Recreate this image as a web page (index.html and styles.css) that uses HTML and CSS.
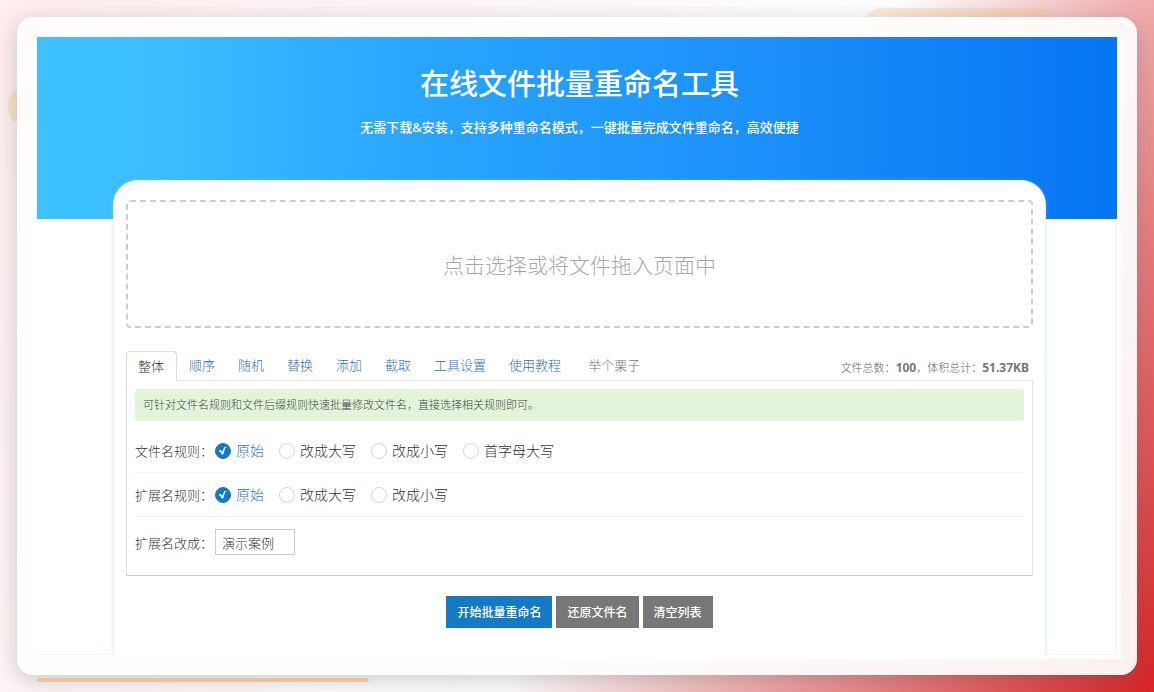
FILE: index.html
```html
<!DOCTYPE html>
<html lang="zh-CN">

<head>
    <meta charset="UTF-8">
    <meta name="viewport" content="width=device-width, initial-scale=1.0">
    <title>在线文件批量重命名工具</title>
    <link rel="stylesheet" href="styles.css">
</head>

<body>

    <div class="deco deco-top"></div>
    <div class="deco deco-left"></div>
    <div class="deco deco-bottom"></div>

    <div class="frame">
        <div class="screen">

            <header class="hero">
                <h1>在线文件批量重命名工具</h1>
                <p>无需下载&amp;安装，支持多种重命名模式，一键批量完成文件重命名，高效便捷</p>
            </header>

            <main class="card">
                <label class="dropzone" for="files">点击选择或将文件拖入页面中
                    <input type="file" id="files" name="files" multiple>
                </label>

                <div class="tabbar">
                    <nav class="tabs">
                        <a href="#" class="active">整体</a>
                        <a href="#">顺序</a>
                        <a href="#">随机</a>
                        <a href="#">替换</a>
                        <a href="#">添加</a>
                        <a href="#">截取</a>
                        <a href="#">工具设置</a>
                        <a href="#">使用教程</a>
                        <a href="#" class="example">举个栗子</a>
                    </nav>
                    <div class="stats">文件总数：<b>100</b>，体积总计：<b>51.37KB</b></div>
                </div>

                <form id="rename">
                    <div class="panel">
                        <div class="notice">可针对文件名规则和文件后缀规则快速批量修改文件名，直接选择相关规则即可。</div>

                        <div class="row" role="radiogroup" aria-labelledby="namelabel">
                            <span class="title" id="namelabel">文件名规则：</span>
                            <label class="option"><input type="radio" name="namerule" value="original" checked><span>原始</span></label>
                            <label class="option"><input type="radio" name="namerule" value="upper"><span>改成大写</span></label>
                            <label class="option"><input type="radio" name="namerule" value="lower"><span>改成小写</span></label>
                            <label class="option"><input type="radio" name="namerule" value="capital"><span>首字母大写</span></label>
                        </div>

                        <div class="row" role="radiogroup" aria-labelledby="extlabel">
                            <span class="title" id="extlabel">扩展名规则：</span>
                            <label class="option"><input type="radio" name="extrule" value="original" checked><span>原始</span></label>
                            <label class="option"><input type="radio" name="extrule" value="upper"><span>改成大写</span></label>
                            <label class="option"><input type="radio" name="extrule" value="lower"><span>改成小写</span></label>
                        </div>

                        <div class="row last">
                            <label class="title" for="newext">扩展名改成：</label>
                            <input type="text" class="text" id="newext" name="newext" value="演示案例">
                        </div>
                    </div>

                    <div class="actions">
                        <button type="button" class="primary">开始批量重命名</button>
                        <button type="button">还原文件名</button>
                        <button type="reset">清空列表</button>
                    </div>
                </form>
            </main>

        </div>
    </div>

</body>

</html>
```

FILE: styles.css
```css
* {
    box-sizing: border-box;
}

body {
    font-family: "Noto Sans", "Noto Sans CJK SC", sans-serif;
    font-size: 13px;
    font-weight: 300;
    color: #333;
    margin: 0;
    padding: 17px;
    min-height: 100vh;
    display: flex;
    position: relative;
    overflow-x: hidden;
    background: linear-gradient(120deg, #ffeeee 0%, #ffffff 58%, #d92525 100%);
}

/* Formas de fondo */
.deco {
    position: absolute;
    background-color: #fbe3cf;
}

.deco-top {
    top: 8px;
    right: 96px;
    width: 196px;
    height: 40px;
    border-radius: 20px;
    background: linear-gradient(90deg, #fdf0e1, #f6c6b2);
}

.deco-left {
    top: 88px;
    left: 8px;
    width: 60px;
    height: 37px;
    border-radius: 16px;
}

.deco-bottom {
    bottom: 10px;
    left: 37px;
    width: 332px;
    height: 4px;
    border-radius: 2px;
    background-color: #e9c39f;
    z-index: 2;
}

.frame {
    flex: 1;
    display: flex;
    padding: 16px;
    border-radius: 16px;
    background-color: rgba(253, 253, 253, 0.94);
    box-shadow: 0 5px 24px rgba(50, 60, 75, 0.26);
    position: relative;
}

.screen {
    flex: 1;
    display: flex;
    flex-direction: column;
    border: 4px solid #fff;
    background-color: #fff;
    box-shadow: inset -1px -1px 0 #f8f4f5;
}

.hero {
    height: 182px;
    padding: 25px 0 0 5px;
    text-align: center;
    color: #fff;
    background: linear-gradient(90deg, #3dc1ff 0%, #3bbdff 12%, #2aa7ff 33%, #1b90fa 67%, #0575f2 100%);
}

.hero h1 {
    margin: 0;
    font-size: 29px;
    line-height: 44px;
    font-weight: 500;
}

.hero p {
    margin: 11px 0 0;
    font-size: 13px;
    line-height: 20px;
    font-weight: 500;
}

.card {
    flex: 1;
    margin: -39px 71px 0 76px;
    padding: 19px 12px;
    border: 1px solid #eee;
    border-top-color: #fff;
    border-bottom: none;
    border-radius: 25px 25px 0 0;
    background-color: #fff;
    box-shadow: 0 0 4px rgba(140, 200, 255, 0.3);
    clip-path: inset(-6px -6px 0 -6px);
}

.dropzone {
    display: flex;
    align-items: center;
    justify-content: center;
    height: 128px;
    border: 2px dashed #ccc;
    border-radius: 4px;
    font-size: 21px;
    color: #a8a8a8;
    cursor: pointer;
}

.dropzone input {
    display: none;
}

.tabbar {
    display: flex;
    justify-content: space-between;
    align-items: flex-end;
    margin-top: 23px;
}

.tabs {
    display: flex;
}

.tabs a {
    padding: 0 11px 0 12px;
    line-height: 29px;
    color: #346fb0;
    text-decoration: none;
}

.tabs .active {
    padding: 0 12px 0 11px;
    margin-bottom: -1px;
    border: 1px solid #ddd;
    border-bottom: none;
    border-radius: 4px 4px 0 0;
    background-color: #fff;
    color: #333;
    position: relative;
}

.tabs .example {
    margin-left: 4px;
    color: #777;
}

.stats {
    padding-right: 4px;
    font-size: 11px;
    line-height: 25px;
    color: #666;
}

.stats b {
    font-size: 12px;
    font-weight: 700;
    color: #777;
}

.panel {
    padding: 8px;
    border: 1px solid #e4e4e4;
    border-bottom-color: #ccc;
    border-left-color: #ddd;
}

.notice {
    padding: 0 8px;
    border-radius: 3px;
    font-size: 11px;
    line-height: 32px;
    color: #444;
    background-color: #e2f4d9;
    margin-bottom: 8px;
}

.row {
    display: flex;
    align-items: center;
    gap: 15px;
    height: 44px;
    border-bottom: 1px solid #f3f3f3;
}

.row .title {
    width: 80px;
    margin-right: -15px;
}

.row.last {
    height: 50px;
    border-bottom: none;
}

.option {
    display: flex;
    align-items: center;
    gap: 5px;
    font-size: 14px;
    line-height: 20px;
    cursor: pointer;
}

.option input {
    appearance: none;
    width: 16px;
    height: 16px;
    margin: 0;
    border: 1px solid #d5d5d5;
    border-radius: 50%;
    background-color: #fff;
}

.option input:checked {
    border-color: #147ac4;
    background-color: #147ac4;
}

/* Marca de seleccionado */
.option input:checked::before {
    content: "";
    display: block;
    width: 8px;
    height: 8px;
    margin: 3px;
    background-color: #fff;
    clip-path: polygon(0 50%, 24% 44%, 42% 70%, 68% 0, 100% 0, 100% 12%, 80% 12%, 52% 100%, 36% 100%, 14% 62%, 0 66%);
}

.option input:checked + span {
    color: #2f74bd;
}

.text {
    width: 80px;
    height: 26px;
    padding: 0 6px;
    border: 1px solid #ccc;
    font: inherit;
    color: #333;
}

.actions {
    display: flex;
    justify-content: center;
    gap: 4px;
    margin-top: 20px;
}

button {
    height: 32px;
    padding: 0 11px;
    border: none;
    font-family: inherit;
    font-size: 12px;
    font-weight: 500;
    color: #fff;
    background-color: #777;
    cursor: pointer;
}

.primary {
    background-color: #147ac4;
}
```
